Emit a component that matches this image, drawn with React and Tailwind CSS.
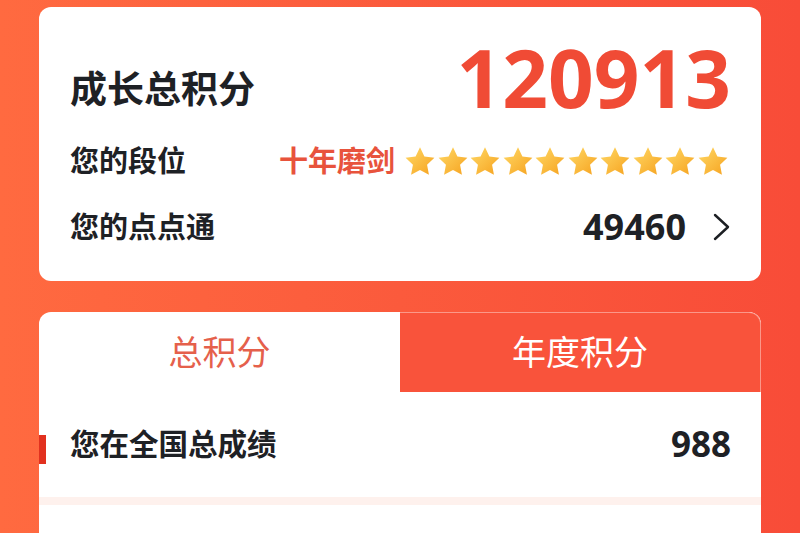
import React from 'react';

const font = { fontFamily: '"Noto Sans", "Noto Sans CJK SC", sans-serif' };

function Star() {
    return (
        <svg width="32" height="31" viewBox="0 0 24 23" className="shrink-0">
            <defs>
                <linearGradient id="starFill" x1="0" y1="0" x2="1" y2="1">
                    <stop offset="0" stopColor="#ffd966" />
                    <stop offset="1" stopColor="#f6a21f" />
                </linearGradient>
            </defs>
            <path
                d="M12 0.8l3.3 6.9 7.5 1-5.5 5.2 1.4 7.5L12 17.8l-6.7 3.6 1.4-7.5L1.2 8.7l7.5-1z"
                fill="url(#starFill)"
            />
        </svg>
    );
}

function Chevron() {
    return (
        <svg width="18" height="28" viewBox="0 0 18 28" fill="none">
            <path d="M2 2l13 12L2 26" stroke="#1c1f23" strokeWidth="2.4" strokeLinecap="round" strokeLinejoin="round" />
        </svg>
    );
}

function App() {
    const stars = [0, 1, 2, 3, 4, 5, 6, 7, 8, 9];

    return (
        <div style={font} className="w-[800px] h-[533px] overflow-hidden bg-gradient-to-r from-[#ff6a40] via-[#fb5a3c] to-[#f84c38] px-[39px] pt-[7px]">
            {/* summary card */}
            <div className="bg-white rounded-[12px] h-[274px] px-[30px] pt-[31px] pb-[21px] flex flex-col text-[#1e2125]">
                <div className="h-[80px] flex items-center justify-between">
                    <span className="text-[37px] font-bold mt-[22px] ml-px">成长总积分</span>
                    <span className="text-[80px] font-bold leading-none text-[#f04b35] -mt-[2px]">120913</span>
                </div>
                <div className="mt-[10px] h-[66px] flex items-center whitespace-nowrap">
                    <span className="shrink-0 text-[29px] font-semibold ml-px">您的段位</span>
                    <span className="shrink-0 text-[29px] font-bold text-[#e8533c] ml-[93px]">十年磨剑</span>
                    <div className="shrink-0 ml-[9px] flex gap-[0.5px]">
                        {stars.map((s) => (
                            <Star key={s} />
                        ))}
                    </div>
                </div>
                <div className="h-[66px] flex items-center justify-between">
                    <span className="text-[29px] font-semibold ml-px">您的点点通</span>
                    <div className="flex items-center gap-[27px]">
                        <span className="text-[36px] font-bold">49460</span>
                        <Chevron />
                    </div>
                </div>
            </div>

            {/* ranking card */}
            <div className="mt-[31px] bg-white rounded-t-[12px] overflow-hidden">
                <div className="grid grid-cols-2 h-[80px]">
                    <div className="flex items-center justify-center text-[34px] font-normal text-[#e5604b]">总积分</div>
                    <div className="flex items-center justify-center text-[34px] font-normal text-white bg-[#f9533b] rounded-tr-[12px] border-t border-r border-white/40">
                        年度积分
                    </div>
                </div>
                <div className="relative h-[105px] flex items-center justify-between pl-[31px] pr-[30px] text-[#1e2125]">
                    <span className="absolute left-0 top-[43px] w-[7px] h-[29px] bg-[#e2311f]" />
                    <span className="text-[29.5px] font-semibold">您在全国总成绩</span>
                    <span className="text-[35px] font-bold">988</span>
                </div>
                <div className="h-[8px] bg-[#fef1ed]" />
                <div className="h-[60px] bg-white" />
            </div>
        </div>
    );
}

export default App;
